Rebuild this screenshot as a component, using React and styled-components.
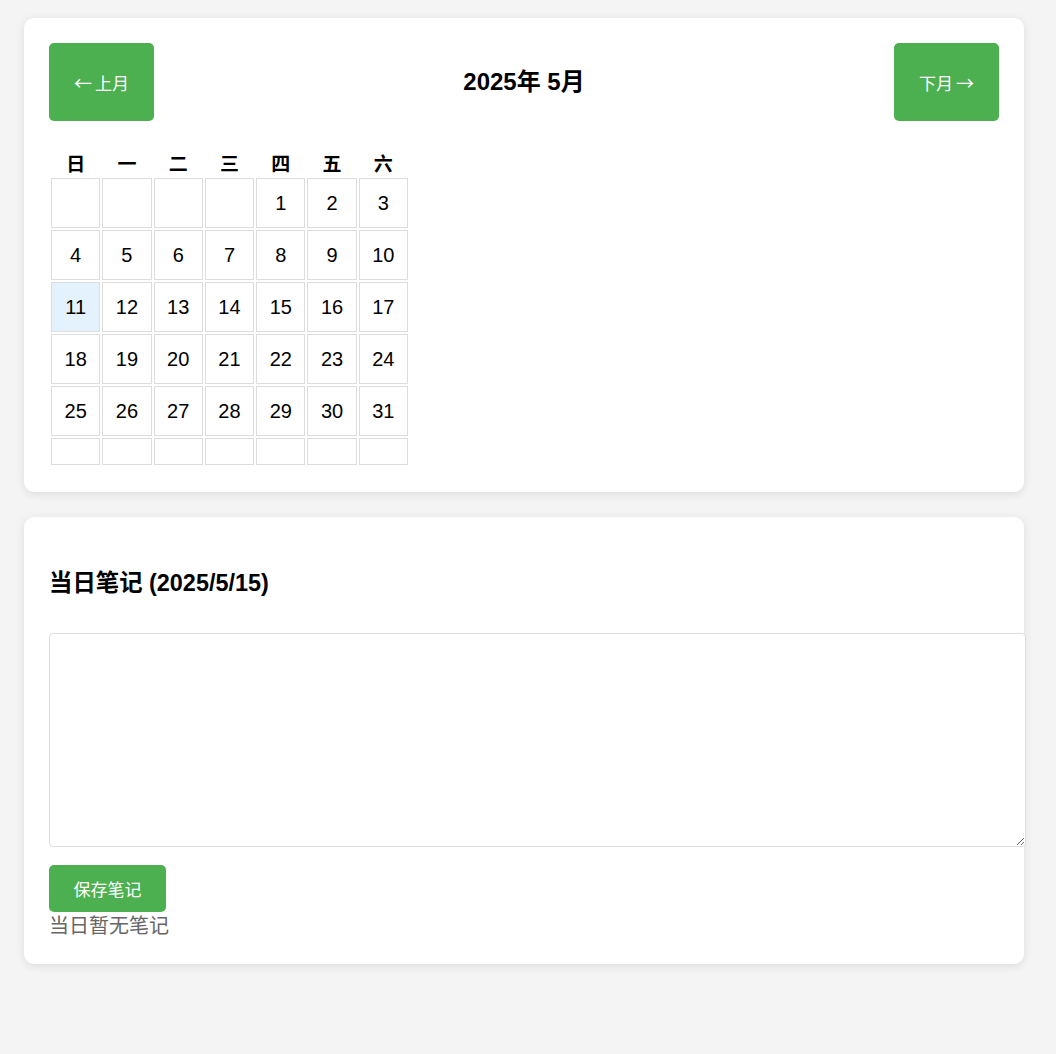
import React from "react";
import styled, { createGlobalStyle } from "styled-components";

const Global = createGlobalStyle`
  html, body { margin: 0; padding: 0; background: #f4f4f4; }
  body { font-family: "Liberation Sans", Arial, "Noto Sans CJK SC", sans-serif; color: #000; }
`;

const Page = styled.div`
  padding: 18px 32px 90px 24px;
  display: flex;
  flex-direction: column;
  gap: 25px;
`;

const Card = styled.section`
  width: 1000px;
  box-sizing: border-box;
  background: #fff;
  border-radius: 10px;
  padding: 25px;
  box-shadow: 0 2px 10px rgba(0, 0, 0, 0.1);
`;

const Header = styled.div`
  display: flex;
  justify-content: space-between;
  align-items: center;
  margin-bottom: 26px;
`;

const GreenButton = styled.button`
  background: #4caf50;
  color: #fff;
  border: none;
  border-radius: 5px;
  font-family: "Liberation Sans", Arial, "Noto Sans CJK SC", sans-serif;
  font-size: 17px;
  cursor: pointer;
  width: ${p => p.$w}px;
  height: ${p => p.$h}px;
  padding: 0;
  display: inline-flex;
  align-items: center;
  justify-content: center;
  gap: 3px;
`;

const Arrow = styled.span`
  font-family: "Noto Sans CJK SC", sans-serif;
  font-size: 18px;
  line-height: 1;
`;

const Title = styled.h2`
  margin: 0;
  font-size: 24px;
  line-height: 28px;
  font-weight: bold;
`;

const Table = styled.table`
  border-collapse: separate;
  border-spacing: 2px;
  width: 361px;
`;

const Th = styled.th`
  font-size: 19px;
  font-weight: bold;
  height: 24px;
  padding: 0;
  text-align: center;
  vertical-align: middle;
`;

const Td = styled.td`
  box-sizing: border-box;
  height: ${p => (p.$short ? 27 : 50)}px;
  padding: 0;
  border: 1px solid #ddd;
  text-align: center;
  vertical-align: middle;
  font-size: 20px;
  background: ${p => (p.$today ? "#e3f2fd" : "#fff")};
`;

const NoteTitle = styled.h3`
  margin: 27px 0 36px;
  font-size: 23.4px;
  font-weight: bold;
  line-height: 28px;
`;

const NoteArea = styled.textarea`
  display: block;
  box-sizing: border-box;
  width: 977px;
  height: 214px;
  border: 1px solid #ddd;
  border-radius: 4px;
  padding: 10px;
  font-family: "Liberation Sans", Arial, "Noto Sans CJK SC", sans-serif;
  font-size: 16px;
  margin: 0 0 18px;
  resize: both;
`;

const Empty = styled.p`
  margin: 1px 0 0;
  font-size: 20px;
  line-height: 26px;
  color: #666;
`;

const weekdays = ["日", "一", "二", "三", "四", "五", "六"];

function buildWeeks() {
  const cells = [null, null, null, null];
  for (let d = 1; d <= 31; d++) cells.push(d);
  while (cells.length < 42) cells.push(null);
  const weeks = [];
  for (let i = 0; i < 42; i += 7) weeks.push(cells.slice(i, i + 7));
  return weeks;
}

export default function App() {
  const weeks = buildWeeks();
  return (
    <>
      <Global />
      <Page>
        <Card>
          <Header>
            <GreenButton $w={105} $h={78}>
              <Arrow>←</Arrow>上月
            </GreenButton>
            <Title>2025年 5月</Title>
            <GreenButton $w={105} $h={78}>
              下月<Arrow>→</Arrow>
            </GreenButton>
          </Header>
          <Table>
            <thead>
              <tr>
                {weekdays.map(w => (
                  <Th key={w}>{w}</Th>
                ))}
              </tr>
            </thead>
            <tbody>
              {weeks.map((week, i) => {
                const short = week.every(d => d === null);
                return (
                  <tr key={i}>
                    {week.map((d, j) => (
                      <Td key={j} $short={short} $today={d === 11}>
                        {d ?? ""}
                      </Td>
                    ))}
                  </tr>
                );
              })}
            </tbody>
          </Table>
        </Card>
        <Card>
          <NoteTitle>当日笔记 (2025/5/15)</NoteTitle>
          <NoteArea />
          <GreenButton $w={117} $h={47}>保存笔记</GreenButton>
          <Empty>当日暂无笔记</Empty>
        </Card>
      </Page>
    </>
  );
}
